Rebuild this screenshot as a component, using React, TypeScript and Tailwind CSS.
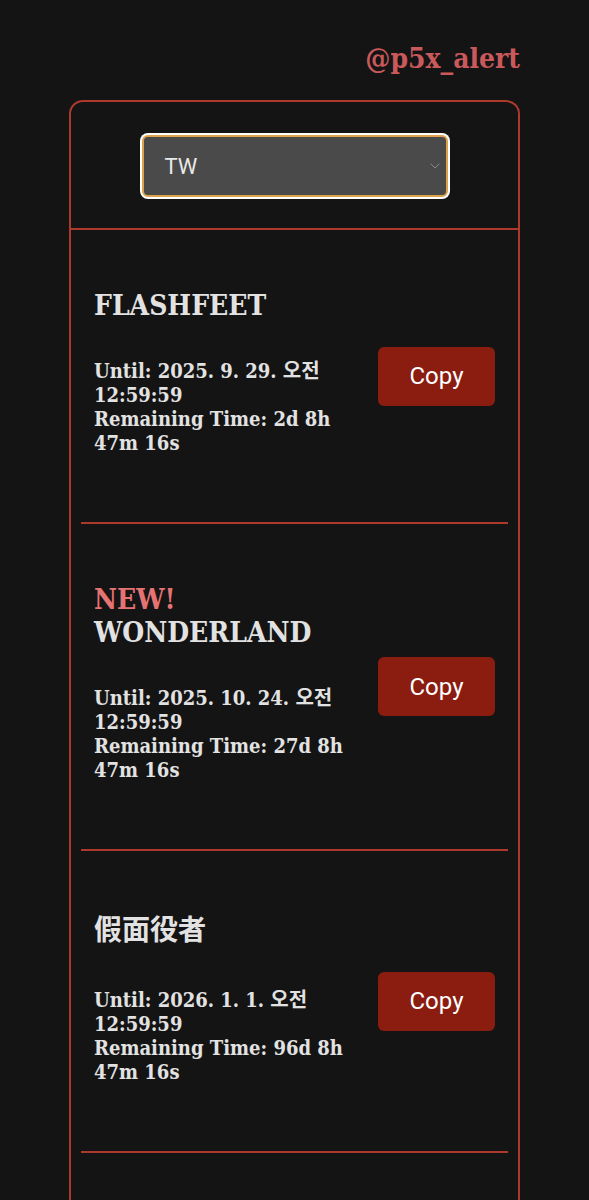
import { ChevronDown } from "lucide-react";

type Code = {
  name: string;
  isNew?: boolean;
  cjk?: boolean;
  until: string;
  remaining: string;
};

const codes: Code[] = [
  {
    name: "FLASHFEET",
    until: "2025. 9. 29. 오전 12:59:59",
    remaining: "2d 8h 47m 16s",
  },
  {
    name: "WONDERLAND",
    isNew: true,
    until: "2025. 10. 24. 오전 12:59:59",
    remaining: "27d 8h 47m 16s",
  },
  {
    name: "假面役者",
    cjk: true,
    until: "2026. 1. 1. 오전 12:59:59",
    remaining: "96d 8h 47m 16s",
  },
];

const serif =
  "font-['DejaVu_Serif_Condensed','DejaVu_Serif','Noto_Sans_CJK_KR','Noto_Sans_CJK_TC',serif]";

export default function App() {
  return (
    <div className={`min-h-screen bg-[#141414] text-[#e2e2e2] ${serif}`}>
      <div className="mx-auto w-[451px] pt-[38px]">
        {/* 상단 계정명 */}
        <div className="text-right text-[28px] font-bold text-[#c9595a]">@p5x_alert</div>

        <div className="mt-[20px] rounded-[14px] border-2 border-[#ad392d]">
          {/* 서버 선택 */}
          <div className="flex justify-center border-b-2 border-[#ad392d] pt-[33px] pb-[31px]">
            <div className="relative flex h-[62px] w-[306px] items-center rounded-[6px] border-2 border-[#dca24c] bg-[#4a4a4a] pl-[21px] ring-2 ring-white font-['Roboto',sans-serif]">
              <span className="text-[22px] text-[#e8e8e8]">TW</span>
              <ChevronDown
                className="absolute right-[3px] top-[21px] h-[16px] w-[16px] text-[#9a9a9a]"
                strokeWidth={1.2}
              />
            </div>
          </div>

          {/* 코드 목록 */}
          {codes.map((c) => (
            <div
              key={c.name}
              className="mx-[10px] flex items-center border-b-2 border-[#ad392d] px-[13px] pt-[59px] pb-[59px]"
            >
              <div className="w-[270px] mb-[8px]">
                <h2 className={`text-[28px] font-bold ${c.cjk ? "leading-[41px]" : "leading-[33px]"}`}>
                  {c.isNew && <span className="block text-[#e57373]">NEW!</span>}
                  {c.name}
                </h2>
                <div className="mt-[37px] text-[20px] font-bold leading-[24px]">
                  <p>Until: {c.until}</p>
                  <p>Remaining Time: {c.remaining}</p>
                </div>
              </div>
              <button className="ml-auto h-[59px] w-[117px] rounded-[6px] bg-[#8a1c10] font-['Roboto',sans-serif] text-[24px] text-white">
                Copy
              </button>
            </div>
          ))}
          <div className="h-[60px]" />
        </div>
      </div>
    </div>
  );
}
